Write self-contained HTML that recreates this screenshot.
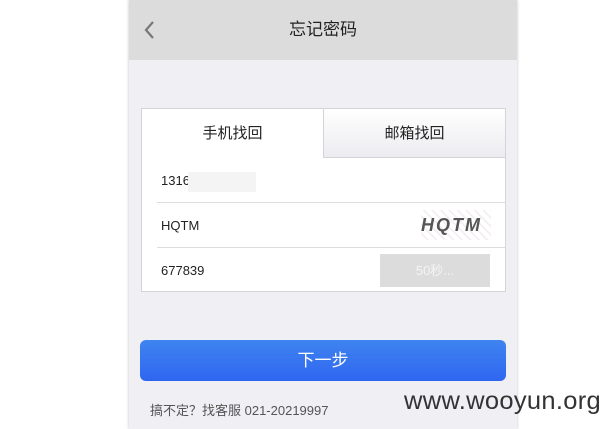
<!DOCTYPE html>
<html><head><meta charset="utf-8"><style>
*{margin:0;padding:0;box-sizing:border-box}
body{width:610px;height:429px;background:#fff;position:relative;overflow:hidden;font-family:"Liberation Sans","Noto Sans CJK SC",sans-serif}
.phone{position:absolute;left:129px;top:0;width:388px;height:429px;background:#efeff4;box-shadow:0 0 3px rgba(0,0,0,.25)}
.hd{position:absolute;left:0;top:0;width:388px;height:60px;background:#dcdcdc;text-align:center;line-height:60px;font-size:17px;color:#222}
.back{position:absolute;left:14px;top:20px}
.card{position:absolute;left:12px;top:108px;width:365px;height:184px;background:#fff;border:1px solid #d4d4d8;overflow:hidden}
.tab{position:absolute;top:0;height:49px;line-height:49px;text-align:center;font-size:15px;color:#222}
.t1{left:0;width:181px;background:#fff}
.t2{left:181px;width:182px;background:linear-gradient(#fff,#ececf0);border-left:1px solid #d4d4d8;border-bottom:1px solid #d4d4d8}
.row{position:absolute;left:15px;right:0;height:45px;line-height:45px;font-size:13px;color:#222;padding-left:4px}
.div{border-top:1px solid #ddd}
.btn{position:absolute;left:11px;top:340px;width:366px;height:41px;border-radius:6px;background:linear-gradient(#3f84f0,#2f66f0);color:#fff;text-align:center;line-height:41px;font-size:17px}
.ft{position:absolute;left:21px;top:400px;font-size:13px;color:#555}
.wm{position:absolute;left:404px;top:387px;font-size:25px;color:#333;letter-spacing:.3px;transform:scaleX(1.02);transform-origin:left}
.cap{position:absolute;right:14px;top:7px;width:70px;height:30px;font:italic bold 18px "Liberation Sans",sans-serif;color:#555;letter-spacing:2px;line-height:30px;background:repeating-linear-gradient(45deg,#fff 0 4px,#f3eef3 4px 6px)}
.sms{position:absolute;right:15px;top:6px;width:110px;height:33px;background:#dcdcdc;color:#f4f4f4;text-align:center;line-height:33px;font-size:13px}
</style></head><body>
<div class="phone">
 <div class="hd">忘记密码
  <svg class="back" width="12" height="20" viewBox="0 0 12 20"><path d="M10 2L3 10l7 8" fill="none" stroke="#777" stroke-width="2.2"/></svg>
 </div>
 <div class="card">
  <div class="tab t1">手机找回</div>
  <div class="tab t2">邮箱找回</div>
  <div class="row" style="top:49px">1316<span style="display:inline-block;width:68px;height:20px;background:#f4f4f4;vertical-align:middle;margin-left:-2px"></span></div>
  <div class="row div" style="top:93px">HQTM<div class="cap">HQTM</div></div>
  <div class="row div" style="top:138px">677839<div class="sms">50秒...</div></div>
 </div>
 <div class="btn">下一步</div>
 <div class="ft">搞不定？找客服 021-20219997</div>
</div>
<div class="wm">www.wooyun.org</div>
</body></html>
